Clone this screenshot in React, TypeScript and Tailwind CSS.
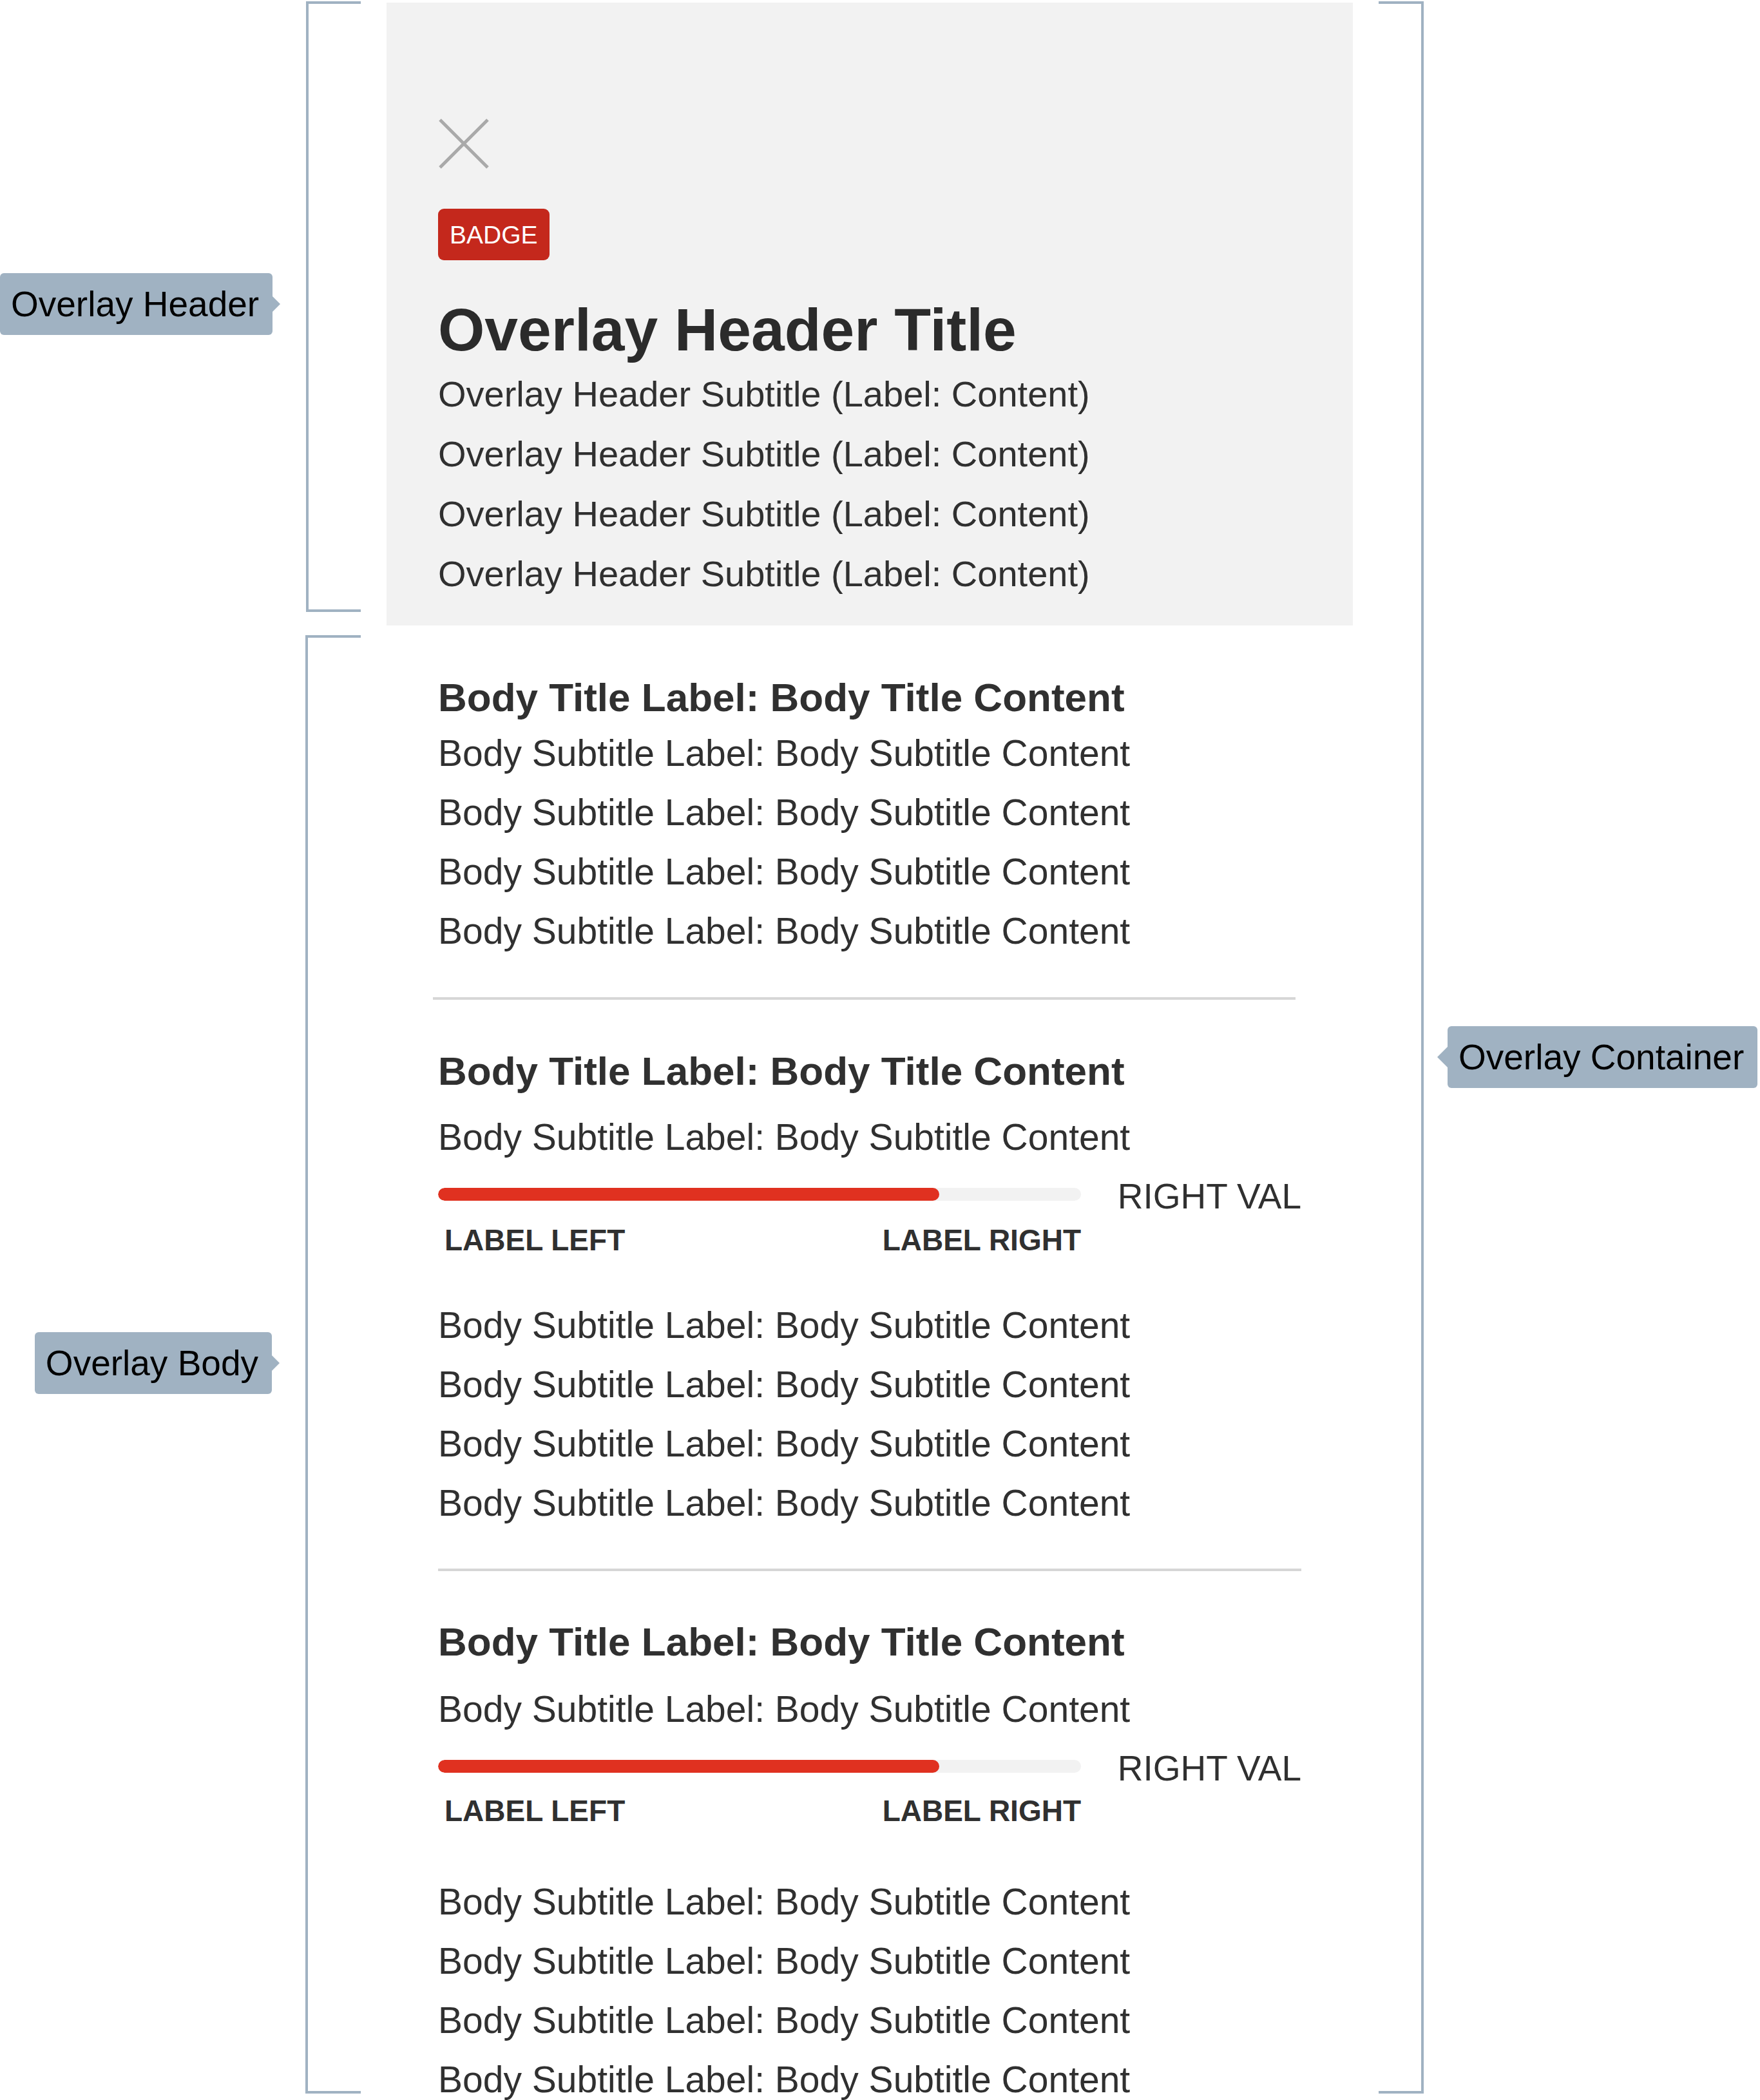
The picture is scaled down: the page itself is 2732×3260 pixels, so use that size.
import React from "react";

const SUBTITLE = "Body Subtitle Label: Body Subtitle Content";
const HEADER_SUBTITLE = "Overlay Header Subtitle (Label: Content)";

type Arrow = "left" | "right";

// Annotation tag with a small pointer on one side
function Tag({ label, arrow, big = false }: { label: string; arrow: Arrow; big?: boolean }) {
  return (
    <div className="flex items-center">
      {arrow === "left" && (
        <div
          className={
            big
              ? "h-0 w-0 border-y-[16px] border-r-[16px] border-y-transparent border-r-[#a0b2c2]"
              : "h-0 w-0 border-y-[12px] border-r-[12px] border-y-transparent border-r-[#a0b2c2]"
          }
        />
      )}
      <div className="h-[96px] whitespace-nowrap rounded-[6px] bg-[#a0b2c2] pl-[17px] pr-[21px] text-[55px] leading-[96px] text-black">
        {label}
      </div>
      {arrow === "right" && (
        <div className="h-0 w-0 border-y-[12px] border-l-[12px] border-y-transparent border-l-[#a0b2c2]" />
      )}
    </div>
  );
}

function Lines({ text, className }: { text: string; className: string }) {
  return (
    <div className={className}>
      {[0, 1, 2, 3].map((i) => (
        <div key={i} className="whitespace-nowrap">
          {text}
        </div>
      ))}
    </div>
  );
}

function ProgressRow({ value, labelsMt }: { value: string; labelsMt: string }) {
  return (
    <div className="mt-[16px] flex items-start">
      <div className="w-[998px]">
        <div className="mt-[17px] h-[20px] w-full overflow-hidden rounded-full bg-[#f2f2f2]">
          <div className="h-full w-[78%] rounded-full bg-[#e03120]" />
        </div>
        <div className={`${labelsMt} flex justify-between text-[46px] font-bold leading-[56px]`}>
          <span className="pl-[10px]">LABEL LEFT</span>
          <span>LABEL RIGHT</span>
        </div>
      </div>
      <div className="ml-auto text-[55px] leading-[60px]">{value}</div>
    </div>
  );
}

function BodySection({
  titleMt,
  subMt,
  labelsMt,
  linesMt,
}: {
  titleMt: string;
  subMt: string;
  labelsMt: string;
  linesMt: string;
}) {
  return (
    <div>
      <h2 className={`${titleMt} whitespace-nowrap text-[62px] font-bold leading-[80px]`}>
        Body Title Label: Body Title Content
      </h2>
      <div className={`${subMt} whitespace-nowrap text-[57px] leading-[92px]`}>{SUBTITLE}</div>
      <ProgressRow value="RIGHT VAL" labelsMt={labelsMt} />
      <Lines text={SUBTITLE} className={`${linesMt} text-[57px] leading-[92px]`} />
    </div>
  );
}

export default function App() {
  return (
    <div className="h-[3260px] w-[2732px] overflow-hidden bg-white font-['Liberation_Sans',Arial,sans-serif] text-[#303030]">
      <div className="flex items-start">
        {/* Left annotations */}
        <div className="flex w-[560px] shrink-0 flex-col">
          <div className="mt-[2px] flex h-[948px]">
            <div className="flex flex-1 items-center justify-end pb-[8px] pr-[40px]">
              <Tag label="Overlay Header" arrow="right" />
            </div>
            <div className="w-[86px] border-y-4 border-l-4 border-[#a0b2c2]" />
          </div>
          <div className="mt-[36px] flex h-[2264px]">
            <div className="flex flex-1 items-center justify-end pb-[4px] pr-[40px]">
              <Tag label="Overlay Body" arrow="right" />
            </div>
            <div className="w-[86px] border-y-4 border-l-4 border-[#a0b2c2]" />
          </div>
        </div>

        {/* Overlay panel */}
        <div className="ml-[40px] w-[1500px] shrink-0 pt-[4px]">
          {/* Header */}
          <div className="bg-[#f2f2f2] px-[80px] pb-[34px] pt-[179px]">
            <svg width="80" height="80" viewBox="0 0 80 80" className="block">
              <path d="M3 3 L77 77 M77 3 L3 77" stroke="#a9a9a9" strokeWidth="5" fill="none" />
            </svg>
            <div className="mt-[61px] flex h-[80px] w-fit items-center rounded-[9px] bg-[#c4281c] px-[18px] text-[39px] leading-none text-white">
              BADGE
            </div>
            <h1 className="mt-[62px] whitespace-nowrap text-[93px] font-bold leading-[93px] text-[#2b2b2b]">
              Overlay Header Title
            </h1>
            <Lines text={HEADER_SUBTITLE} className="mt-[6px] text-[56px] leading-[93px]" />
          </div>

          {/* Body */}
          <div className="px-[80px]">
            <div className="pt-[72px]">
              <h2 className="whitespace-nowrap text-[62px] font-bold leading-[80px]">
                Body Title Label: Body Title Content
              </h2>
              <Lines text={SUBTITLE} className="text-[57px] leading-[92px]" />
            </div>
            <div className="ml-[-8px] mt-[57px] h-[4px] w-[1339px] bg-[#d6d6d6]" />

            <BodySection titleMt="mt-[71px]" subMt="mt-[16px]" labelsMt="mt-[33px]" linesMt="mt-[58px]" />
            <div className="mt-[56px] h-[4px] w-full bg-[#d6d6d6]" />

            <BodySection titleMt="mt-[70px]" subMt="mt-[18px]" labelsMt="mt-[31px]" linesMt="mt-[67px]" />
          </div>
        </div>

        {/* Right annotation */}
        <div className="ml-[40px] mt-[2px] h-[3248px] w-[70px] shrink-0 border-y-4 border-r-4 border-[#a0b2c2]" />
        <div className="shrink-0 pl-[21px] pt-[1593px]">
          <Tag label="Overlay Container" arrow="left" big />
        </div>
      </div>
    </div>
  );
}
